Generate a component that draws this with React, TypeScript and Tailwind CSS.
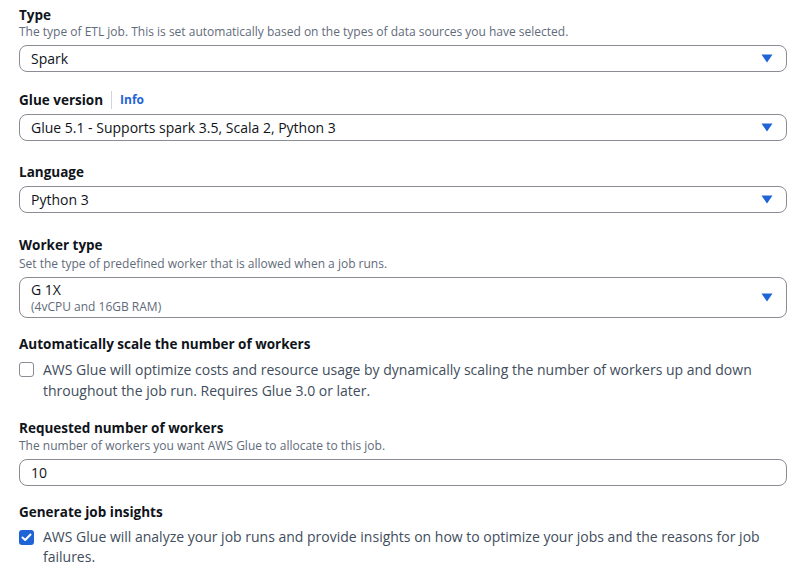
import { useState } from 'react'

function Caret(): JSX.Element {
  return (
    <svg width="12" height="9" viewBox="0 0 12 9" className="shrink-0">
      <path d="M0.5 0.5 H11.5 L6 8.5 Z" fill="#1f64d6" />
    </svg>
  )
}

function Label({ children }: { children: React.ReactNode }): JSX.Element {
  return <div className="text-[13.5px] font-bold leading-[18px] text-[#0f141a]">{children}</div>
}

function Desc({ children }: { children: React.ReactNode }): JSX.Element {
  return <div className="text-[12px] leading-[16px] text-[#5f6b7a]">{children}</div>
}

function Select({ value, sub }: { value: string; sub?: string }): JSX.Element {
  return (
    <div className="mt-[5px] flex items-center justify-between rounded-lg border border-[#8c8c94] bg-white pl-[11px] pr-[13px]">
      <div className={sub ? 'py-[2px]' : 'py-[3px]'}>
        <div className="text-[14px] leading-[19px] text-[#0f141a]">{value}</div>
        {sub && <div className="text-[12px] leading-[16px] text-[#5f6b7a]">{sub}</div>}
      </div>
      <Caret />
    </div>
  )
}

function Checkbox({ checked, onChange }: { checked: boolean; onChange: () => void }): JSX.Element {
  return (
    <button
      type="button"
      onClick={onChange}
      className={
        checked
          ? 'mt-[3px] flex h-[15px] w-[15px] shrink-0 items-center justify-center rounded-[3px] bg-[#1f64d6]'
          : 'mt-[3px] h-[15px] w-[15px] shrink-0 rounded-[3px] border border-[#8c8c94] bg-white'
      }
    >
      {checked && (
        <svg width="11" height="9" viewBox="0 0 11 9">
          <path d="M1.5 4.5 L4.2 7 L9.5 1.5" stroke="white" strokeWidth="2" fill="none" strokeLinecap="round" strokeLinejoin="round" />
        </svg>
      )}
    </button>
  )
}

export default function App(): JSX.Element {
  const [autoScale, setAutoScale] = useState(false)
  const [insights, setInsights] = useState(true)

  return (
    <div className="min-h-[571px] w-[799px] bg-white pl-[19px] pr-[12px] pt-[6px] font-['Open_Sans',sans-serif]">
      <Label>Type</Label>
      <Desc>The type of ETL job. This is set automatically based on the types of data sources you have selected.</Desc>
      <Select value="Spark" />

      <div className="mt-[19px] flex items-center">
        <Label>Glue version</Label>
        <span className="mx-[8px] h-[18px] w-px bg-[#d1d5db]" />
        <a className="text-[12px] font-bold leading-[18px] text-[#1f64d6]">Info</a>
      </div>
      <Select value="Glue 5.1 - Supports spark 3.5, Scala 2, Python 3" />

      <div className="mt-[22px]">
        <Label>Language</Label>
      </div>
      <Select value="Python 3" />

      <div className="mt-[23px]">
        <Label>Worker type</Label>
      </div>
      <div className="mt-[2px]">
        <Desc>Set the type of predefined worker that is allowed when a job runs.</Desc>
      </div>
      <Select value="G 1X" sub="(4vCPU and 16GB RAM)" />

      <div className="mt-[17px]">
        <Label>Automatically scale the number of workers</Label>
      </div>
      <div className="mt-[6px] flex gap-[9px]">
        <Checkbox checked={autoScale} onChange={() => setAutoScale(!autoScale)} />
        <div className="text-[14px] leading-[21px] text-[#414d5c]">
          AWS Glue will optimize costs and resource usage by dynamically scaling the number of workers up and down
          throughout the job run. Requires Glue 3.0 or later.
        </div>
      </div>

      <div className="mt-[18px]">
        <Label>Requested number of workers</Label>
      </div>
      <div className="mt-[1px]">
        <Desc>The number of workers you want AWS Glue to allocate to this job.</Desc>
      </div>
      <div className="mt-[5px] rounded-lg border border-[#8c8c94] bg-white py-[3px] pl-[11px] pr-3 text-[14px] leading-[19px] text-[#0f141a]">
        10
      </div>

      <div className="mt-[17px]">
        <Label>Generate job insights</Label>
      </div>
      <div className="mt-[6px] flex gap-[9px]">
        <Checkbox checked={insights} onChange={() => setInsights(!insights)} />
        <div className="text-[14px] leading-[20px] text-[#414d5c]">
          AWS Glue will analyze your job runs and provide insights on how to optimize your jobs and the reasons for job
          failures.
        </div>
      </div>
    </div>
  )
}
